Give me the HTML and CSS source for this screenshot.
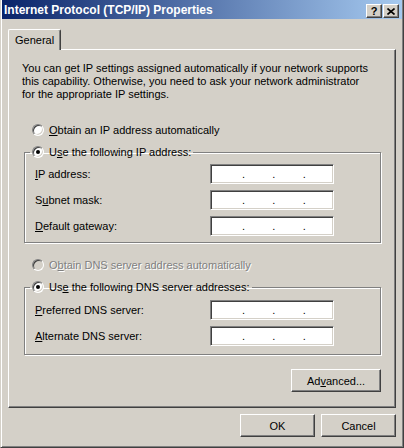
FILE: index.html
```html
<!DOCTYPE html>
<html lang="en">
<head>
  <meta charset="UTF-8">
  <title>Internet Protocol (TCP/IP) Properties</title>
  <link rel="stylesheet" href="styles.css">
</head>
<body>
  <div class="window">
    <!-- Title bar -->
    <div class="titlebar">
      <span class="title">Internet Protocol (TCP/IP) Properties</span>
      <div class="caption-buttons">
        <button class="cap-btn help">?</button>
        <button class="cap-btn close">
          <svg width="8" height="7" viewBox="0 0 8 7"><path d="M0.5 0.5 L7.5 6.5 M7.5 0.5 L0.5 6.5" stroke="#000" stroke-width="1.6" fill="none"/></svg>
        </button>
      </div>
    </div>

    <div class="dialog">
      <div class="tabs">
        <div class="tab">General</div>
      </div>

      <div class="panel">
        <p class="intro">You can get IP settings assigned automatically if your network supports<br>this capability. Otherwise, you need to ask your network administrator<br>for the appropriate IP settings.</p>

        <div class="radio-row first">
          <span class="radio"></span>
          <span><u>O</u>btain an IP address automatically</span>
        </div>

        <fieldset class="group ip-group">
          <legend><span class="radio checked"></span><span>U<u>s</u>e the following IP address:</span></legend>
          <div class="field-row">
            <span class="field-label"><u>I</u>P address:</span>
            <div class="ip-box"><span>.</span><span>.</span><span>.</span></div>
          </div>
          <div class="field-row">
            <span class="field-label">S<u>u</u>bnet mask:</span>
            <div class="ip-box"><span>.</span><span>.</span><span>.</span></div>
          </div>
          <div class="field-row">
            <span class="field-label"><u>D</u>efault gateway:</span>
            <div class="ip-box"><span>.</span><span>.</span><span>.</span></div>
          </div>
        </fieldset>

        <div class="radio-row disabled">
          <span class="radio"></span>
          <span>O<u>b</u>tain DNS server address automatically</span>
        </div>

        <fieldset class="group dns-group">
          <legend><span class="radio checked"></span><span>Us<u>e</u> the following DNS server addresses:</span></legend>
          <div class="field-row">
            <span class="field-label"><u>P</u>referred DNS server:</span>
            <div class="ip-box"><span>.</span><span>.</span><span>.</span></div>
          </div>
          <div class="field-row">
            <span class="field-label"><u>A</u>lternate DNS server:</span>
            <div class="ip-box"><span>.</span><span>.</span><span>.</span></div>
          </div>
        </fieldset>

        <div class="advanced-row">
          <button class="btn advanced">Ad<u>v</u>anced...</button>
        </div>
      </div>

      <div class="button-row">
        <button class="btn">OK</button>
        <button class="btn">Cancel</button>
      </div>
    </div>
  </div>
</body>
</html>
```

FILE: styles.css
```css
body {
  margin: 0;
  padding: 0;
  background-color: #d4d0c8;
  font-family: "Liberation Sans", Arial, sans-serif;
  font-size: 11px;
  color: #000;
}
u {
  text-decoration: underline;
  text-underline-offset: 1px;
}
.window {
  width: 404px;
  height: 448px;
  box-sizing: border-box;
  background-color: #d4d0c8;
  border: 1px solid;
  border-top: none;
  border-color: #d4d0c8 #404040 #404040 #d4d0c8;
  box-shadow: inset 1px 0 #fff, inset -1px -1px #808080;
  padding: 0 1px 1px 1px;
  display: flex;
  flex-direction: column;
}
.titlebar {
  height: 19px;
  background: linear-gradient(to right, #0a246a, #a6caf0);
  display: flex;
  align-items: center;
  justify-content: space-between;
  padding: 0 3px 0 2px;
}
.title {
  color: #fff;
  font-weight: bold;
  font-size: 12px;
  white-space: nowrap;
}
.caption-buttons {
  display: flex;
  gap: 0;
  margin-top: 3px;
}
.cap-btn {
  width: 16px;
  height: 14px;
  padding: 0;
  margin: 0;
  box-sizing: border-box;
  background-color: #d4d0c8;
  border: 1px solid;
  border-color: #fff #404040 #404040 #fff;
  box-shadow: inset -1px -1px #808080;
  display: flex;
  align-items: center;
  justify-content: center;
  font-family: "Liberation Sans", Arial, sans-serif;
  font-weight: bold;
  font-size: 11px;
  line-height: 12px;
}
.cap-btn.close {
  margin-left: 1px;
}
.dialog {
  flex: 1;
  display: flex;
  flex-direction: column;
  padding: 10px 6px 0 6px;
}
.tabs {
  display: flex;
}
.tab {
  position: relative;
  z-index: 1;
  width: 53px;
  height: 21px;
  box-sizing: border-box;
  margin-bottom: -1px;
  background-color: #d4d0c8;
  border: 1px solid;
  border-bottom: none;
  border-color: #fff #404040 #d4d0c8 #fff;
  border-radius: 2px 2px 0 0;
  box-shadow: inset -1px 0 #808080;
  padding: 4px 0 0 6px;
}
.panel {
  height: 359px;
  box-sizing: border-box;
  border: 1px solid;
  border-color: #fff #404040 #404040 #fff;
  box-shadow: inset -1px -1px #808080;
  padding: 12px 14px 0 15px;
  display: flex;
  flex-direction: column;
}
.intro {
  margin: 0 0 0 -2px;
  line-height: 13px;
  white-space: nowrap;
}
.radio-row {
  height: 16px;
  display: flex;
  align-items: center;
  gap: 5px;
  padding-left: 8px;
}
.radio-row.first {
  margin-top: 21px;
}
.radio-row.disabled {
  margin-top: 14px;
  color: #808080;
  text-shadow: 1px 1px #fff;
}
.radio {
  position: relative;
  width: 12px;
  height: 12px;
  box-sizing: border-box;
  border-radius: 50%;
  border: 1px solid;
  border-color: #808080 #fff #fff #808080;
  box-shadow: inset 1px 1px #404040, inset -1px -1px #d4d0c8;
  background-color: #fff;
  flex: none;
}
.radio-row.disabled .radio {
  background-color: #d4d0c8;
}
.radio.checked::after {
  content: "";
  position: absolute;
  left: 3px;
  top: 3px;
  width: 4px;
  height: 4px;
  border-radius: 50%;
  background-color: #000;
}
.group {
  margin: 6px 0 0 0;
  border: 1px solid #808080;
  box-shadow: 1px 1px 0 #fff, inset 1px 1px 0 #fff;
  padding: 4px 10px 6px 10px;
  min-width: 0;
}
.group legend {
  margin-left: -5px;
  padding: 0 2px;
  height: 16px;
  display: flex;
  align-items: center;
  gap: 5px;
}
.field-row {
  display: flex;
  align-items: center;
  height: 20px;
}
.field-row + .field-row {
  margin-top: 6px;
}
.field-label {
  width: 175px;
}
.ip-box {
  width: 124px;
  height: 20px;
  box-sizing: border-box;
  background-color: #fff;
  border: 1px solid;
  border-color: #808080 #fff #fff #808080;
  box-shadow: inset 1px 1px #404040, inset -1px -1px #d4d0c8;
  display: flex;
  padding-left: 31px;
  line-height: 19px;
}
.ip-box span {
  width: 30.5px;
}
.dns-group {
  padding-top: 5px;
  padding-bottom: 8px;
}
.advanced-row {
  display: flex;
  justify-content: flex-end;
  margin-top: 14px;
}
.btn {
  width: 75px;
  height: 23px;
  box-sizing: border-box;
  background-color: #d4d0c8;
  border: 1px solid;
  border-color: #fff #404040 #404040 #fff;
  box-shadow: inset -1px -1px #808080;
  font-family: "Liberation Sans", Arial, sans-serif;
  font-size: 11px;
  color: #000;
  padding: 0;
}
.btn.advanced {
  width: 90px;
}
.button-row {
  display: flex;
  justify-content: flex-end;
  gap: 6px;
  margin-top: 6px;
}
```
